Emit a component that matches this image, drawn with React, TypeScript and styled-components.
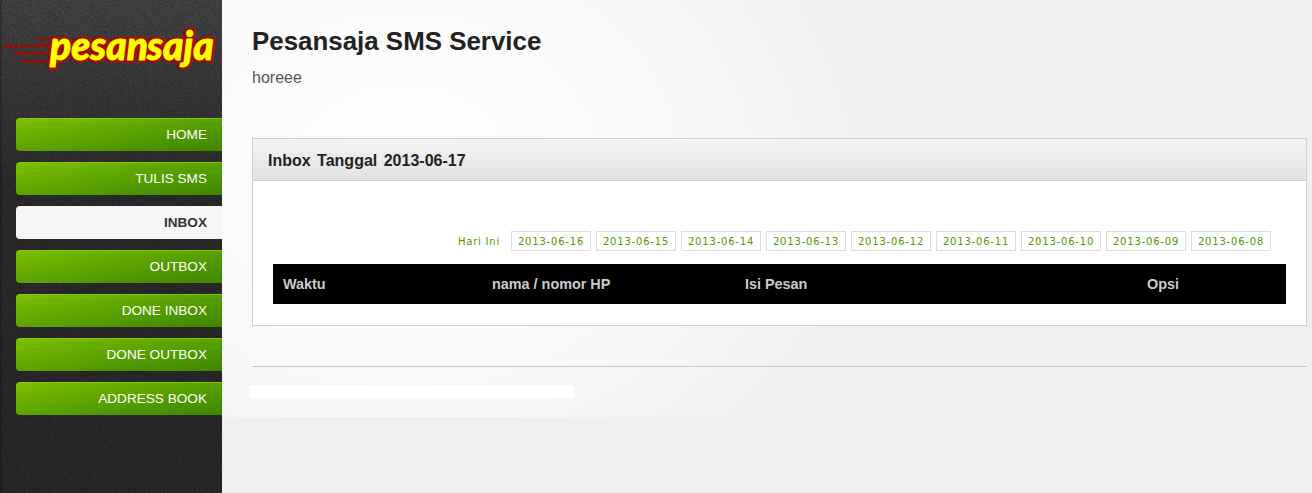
import React from 'react';
import styled, { createGlobalStyle } from 'styled-components';

const navItems = ['HOME', 'TULIS SMS', 'INBOX', 'OUTBOX', 'DONE INBOX', 'DONE OUTBOX', 'ADDRESS BOOK'];
const dates = ['2013-06-16', '2013-06-15', '2013-06-14', '2013-06-13', '2013-06-12', '2013-06-11', '2013-06-10', '2013-06-09', '2013-06-08'];

const GlobalStyle = createGlobalStyle`
  html, body {
    margin: 0;
    padding: 0;
    height: 100%;
    overflow: hidden;
    background: #efefef;
    font-family: "Liberation Sans", Arial, sans-serif;
  }
`;

const Page = styled.div`
  display: flex;
  width: 1312px;
  height: 493px;
  overflow: hidden;
`;

const Sidebar = styled.aside`
  flex: 0 0 222px;
  box-sizing: border-box;
  padding-top: 118px;
  position: relative;
  background: linear-gradient(180deg, #484848 0, #3c3c3c 90px, #2e2e2e 190px, #2b2b2b 100%);
  box-shadow: inset 2px 0 0 rgba(0, 0, 0, 0.2);
`;

const Grain = styled.svg`
  position: absolute;
  left: 0;
  top: 0;
  opacity: 0.4;
`;

const Logo = styled.svg`
  position: absolute;
  left: 0;
  top: 16px;
`;

const Nav = styled.nav`
  position: relative;
  display: flex;
  flex-direction: column;
  gap: 11px;
  padding-left: 16px;
`;

const NavItem = styled.a<{ $active?: boolean }>`
  display: block;
  box-sizing: border-box;
  height: 33px;
  line-height: 31px;
  padding-right: 15px;
  text-align: right;
  font-size: 13.6px;
  border-radius: 4px 0 0 4px;
  font-weight: ${p => (p.$active ? 700 : 400)};
  color: ${p => (p.$active ? '#333333' : '#ffffff')};
  background: ${p =>
    p.$active
      ? '#f6f6f6'
      : 'linear-gradient(170deg, #7dbf00 0%, #62a700 40%, #4b9400 75%, #408500 100%)'};
  border-top: 1px solid ${p => (p.$active ? '#f6f6f6' : '#8ac700')};
`;

const Main = styled.main`
  flex: 1;
  min-width: 0;
  position: relative;
  box-sizing: border-box;
  height: 417px;
  padding: 26px 5px 0 30px;
  background: radial-gradient(ellipse 480px 380px at 180px 170px, #ffffff 0%, #fbfbfb 35%, #f6f6f6 70%, #efefef 100%);
`;

const Title = styled.h1`
  margin: 0;
  font-size: 25.9px;
  line-height: 30px;
  font-weight: 700;
  color: #222222;
`;

const Subtitle = styled.p`
  margin: 12px 0 0;
  font-size: 16px;
  line-height: 20px;
  color: #555555;
`;

const Panel = styled.section`
  margin-top: 50px;
  height: 188px;
  box-sizing: border-box;
  border: 1px solid #d0d0d0;
  background: #ffffff;
`;

const PanelHeader = styled.header`
  height: 42px;
  box-sizing: border-box;
  padding-left: 15px;
  border-bottom: 1px solid #d0d0d0;
  background: linear-gradient(180deg, #f3f3f3 0%, #e3e3e3 100%);
  font-size: 16px;
  line-height: 43px;
  font-weight: 700;
  color: #222222;
  word-spacing: 2px;
`;

const PanelBody = styled.div`
  padding: 50px 20px 0;
`;

const DateBar = styled.div`
  display: flex;
  justify-content: flex-end;
  gap: 5px;
  padding-right: 15px;
`;

const DateLink = styled.a<{ $plain?: boolean }>`
  box-sizing: border-box;
  height: 20px;
  line-height: 19px;
  width: ${p => (p.$plain ? '54px' : '80px')};
  text-align: center;
  white-space: nowrap;
  font-family: "DejaVu Sans", Verdana, sans-serif;
  font-size: 10px;
  letter-spacing: 0.8px;
  color: #4f9a00;
  border: 1px solid ${p => (p.$plain ? 'transparent' : '#dddddd')};
`;

const TableHead = styled.div`
  display: grid;
  grid-template-columns: 209px 253px 402px 1fr;
  margin-top: 13px;
  height: 40px;
  padding-left: 10px;
  background: #000000;
  align-items: center;
`;

const HeadCell = styled.div`
  font-size: 14.4px;
  font-weight: 700;
  color: #cccccc;
`;

const Divider = styled.hr`
  margin: 40px 0 0;
  border: 0;
  border-top: 1px solid #c8c8c8;
`;

const FooterStrip = styled.div`
  width: 325px;
  height: 13px;
  margin: 18px 0 0 -3px;
  background: #ffffff;
`;

const App: React.FC = () => {
  const logoText = (
    <>
      <tspan x="50">pesan</tspan>
      <tspan x="147">saja</tspan>
    </>
  );

  return (
    <Page>
      <GlobalStyle />
      <Sidebar>
        <Grain width="222" height="493">
          <filter id="grain">
            <feTurbulence type="fractalNoise" baseFrequency="1.1" numOctaves="2" seed="4" />
            <feColorMatrix values="0 0 0 0 0  0 0 0 0 0  0 0 0 0 0  1.6 0 0 0 -0.5" />
          </filter>
          <rect width="222" height="493" filter="url(#grain)" />
        </Grain>
        <Logo width="222" height="66" viewBox="0 0 222 66">
          <g fill="none" stroke="#9c0c04" strokeWidth="2.4">
            <line x1="37" y1="23" x2="52" y2="23" />
            <line x1="3" y1="30" x2="52" y2="30" />
            <line x1="14" y1="37" x2="50" y2="37" />
            <line x1="21" y1="45" x2="48" y2="45" />
          </g>
          <g fontFamily="Lato, 'Open Sans', sans-serif" fontWeight="900" fontStyle="italic" fontSize="39">
            <text y="44" fill="#a80a00" stroke="#a80a00" strokeWidth="5.5" strokeLinejoin="round">{logoText}</text>
            <text y="44" fill="#ffff00" stroke="#ffff00" strokeWidth="0.8" strokeLinejoin="round">{logoText}</text>
          </g>
        </Logo>
        <Nav>
          {navItems.map(item => (
            <NavItem key={item} $active={item === 'INBOX'}>
              {item}
            </NavItem>
          ))}
        </Nav>
      </Sidebar>
      <Main>
        <Title>Pesansaja SMS Service</Title>
        <Subtitle>horeee</Subtitle>
        <Panel>
          <PanelHeader>Inbox Tanggal 2013-06-17</PanelHeader>
          <PanelBody>
            <DateBar>
              <DateLink $plain>Hari Ini</DateLink>
              {dates.map(d => (
                <DateLink key={d}>{d}</DateLink>
              ))}
            </DateBar>
            <TableHead>
              <HeadCell>Waktu</HeadCell>
              <HeadCell>nama / nomor HP</HeadCell>
              <HeadCell>Isi Pesan</HeadCell>
              <HeadCell>Opsi</HeadCell>
            </TableHead>
          </PanelBody>
        </Panel>
        <Divider />
        <FooterStrip />
      </Main>
    </Page>
  );
};

export default App;
